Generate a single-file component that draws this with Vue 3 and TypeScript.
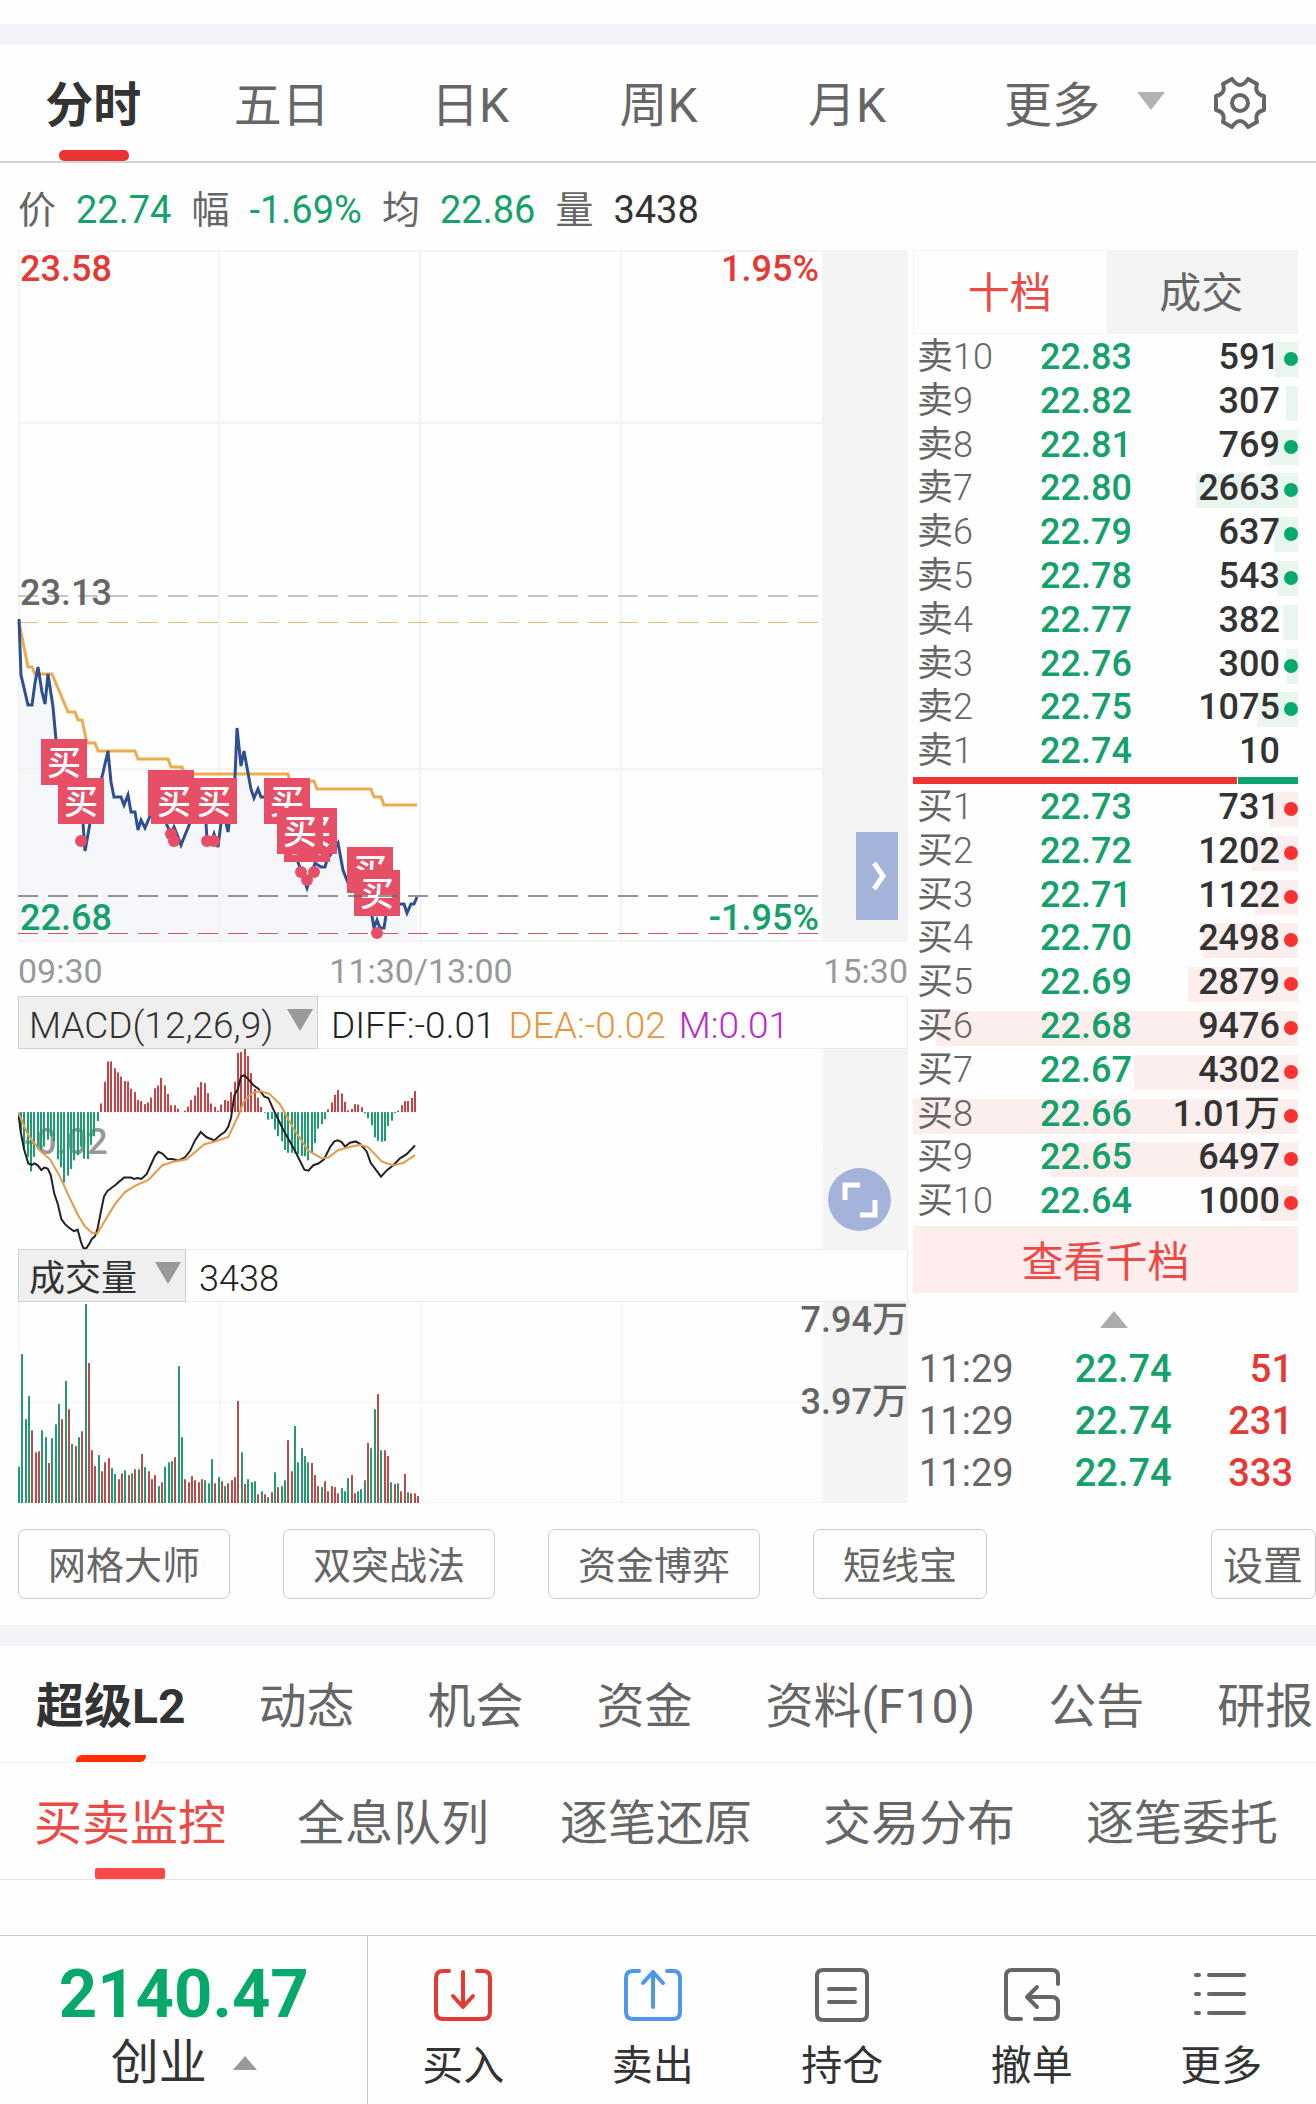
<script setup lang="ts">
interface Level { label: string; price: string; qty: string; lots: number; dot: boolean }

const periods = ['分时', '五日', '日K', '周K', '月K']

const quote = [
  { label: '价', value: '22.74', tone: 'down' },
  { label: '幅', value: '-1.69%', tone: 'down' },
  { label: '均', value: '22.86', tone: 'down' },
  { label: '量', value: '3438', tone: 'plain' },
]

const level = (label: string, price: string, lots: number, dot = true, qty = String(lots)): Level =>
  ({ label, price, qty, lots, dot })

const asks: Level[] = [
  level('卖10', '22.83', 591), level('卖9', '22.82', 307, false), level('卖8', '22.81', 769),
  level('卖7', '22.80', 2663), level('卖6', '22.79', 637), level('卖5', '22.78', 543),
  level('卖4', '22.77', 382, false), level('卖3', '22.76', 300), level('卖2', '22.75', 1075),
  level('卖1', '22.74', 10, false),
]
const bids: Level[] = [
  level('买1', '22.73', 731), level('买2', '22.72', 1202), level('买3', '22.71', 1122),
  level('买4', '22.70', 2498), level('买5', '22.69', 2879), level('买6', '22.68', 9476),
  level('买7', '22.67', 4302), level('买8', '22.66', 10070, true, '1.01万'),
  level('买9', '22.65', 6497), level('买10', '22.64', 1000),
]
const maxLots = 10070
const depth = (l: Level) => ({ '--depth': l.lots < 100 ? '0px' : `${(l.lots / maxLots) * 100}%` })

const ticks = [
  { time: '11:29', price: '22.74', qty: '51' },
  { time: '11:29', price: '22.74', qty: '231' },
  { time: '11:29', price: '22.74', qty: '333' },
]

const priceLine =
  '19,619 21,675 28,705 32,705 35,683 38,667 42,692 45,704 48,674 53,707 56,740 60,787 72,810 83,823 85,851 87,840 90,823 102,777 108,751 111,782 114,797 121,797 124,805 128,795 131,812 135,812 138,830 141,820 145,828 150,816 158,810 166,823 171,834 174,827 178,837 181,845 185,835 190,823 198,812 206,823 207,840 211,843 214,834 218,847 221,823 225,818 228,832 230,817 235,777 237,728 241,766 244,751 248,773 251,789 254,798 258,789 261,797 265,797 280,820 298,862 307,888 315,863 321,867 325,867 327,860 338,843 343,870 348,883 365,900 372,916 374,928 377,920 380,928 384,928 386,915 400,904 404,904 407,913 411,904 414,904 417,897'
const averageLine =
  '19,622 28,667 32,667 35,674 52,674 68,712 75,712 78,720 82,720 87,743 95,743 98,751 135,751 138,759 168,759 171,767 182,767 184,774 288,774 290,781 314,781 317,789 371,789 374,797 381,797 384,805 417,805'

const marks = [[41, 739], [58, 778], [148, 770], [151, 778], [191, 778], [264, 778], [284, 816], [291, 808], [277, 808], [347, 847], [354, 870]]
const dots = [[81, 841], [171, 834], [174, 841], [207, 841], [214, 841], [301, 872], [307, 880], [314, 872], [377, 933]]

const macd = [
  -55, -110, -130, -172, -130, -105, -115, -100, -80, -70, -85, -137, -160, -204, -184, -165, -140, -125, -100, -135, -136, -95, -70, -26,
  25, 88, 147, 147, 127, 115, 103, 90, 89, 68, 58, 35, 32, 23, 28, 42, 69, 77, 99, 77, 53, 20, 20, 10, 1, 4, 16, 35, 48, 72, 87, 84, 55, 25,
  15, 4, 22, 35, 33, 58, 88, 172, 174, 183, 162, 113, 67, 42, 15, -2, -22, -20, -50, -70, -85, -110, -118, -118, -120, -122, -127, -128,
  -140, -120, -90, -48, -35, -20, 8, 28, 50, 64, 54, 30, 5, 9, 23, 22, 14, -4, -18, -38, -73, -83, -86, -84, -40, -25, -3, 4, 20, 32, 32, 41, 61,
]
const diffLine =
  '55,385 62,440 72,490 85,532 95,536 104,532 114,538 124,551 133,544 143,547 152,565 163,620 173,648 184,693 195,708 208,719 222,728 233,724 243,760 250,777 258,779 268,765 276,750 285,743 293,720 302,675 312,628 322,612 345,595 372,573 393,573 402,577 413,574 424,577 440,563 453,535 465,510 475,498 487,503 503,519 517,519 535,524 555,514 570,496 585,465 602,441 620,456 643,465 660,450 675,440 685,425 693,400 703,335 714,315 723,280 733,276 745,288 760,305 775,315 793,338 805,342 820,375 850,435 885,495 913,550 925,553 940,537 955,532 972,520 990,485 1003,468 1013,465 1025,470 1035,483 1050,472 1067,468 1080,475 1100,497 1112,530 1143,570 1160,552 1180,537 1200,517 1220,505 1245,480'
const deaLine =
  '55,385 85,450 120,495 150,520 180,570 208,630 233,680 255,715 275,732 292,735 310,705 345,650 375,615 405,597 445,580 487,537 520,527 560,520 612,477 650,467 685,455 714,395 733,350 755,329 780,322 808,330 840,360 880,430 925,495 965,517 985,515 1015,493 1045,485 1080,478 1105,485 1145,526 1180,538 1210,530 1245,508'

/* positive: rising minute, negative: falling minute */
const volume = [
  -105, -432, -243, -310, 211, 147, 150, -211, -191, 116, -188, -228, -287, 243, -354, 272, -171, 165, -191, 208, -577, 406, 153, 107, -139,
  92, 118, 130, -101, -84, 69, 86, -95, 81, -86, 98, -98, 142, -104, 92, 69, 81, -49, 60, -105, -118, -121, 133, -397, -191, 69, 60, 78, 66,
  60, 69, -66, -57, -127, 57, -75, 63, -49, 57, 66, 75, 296, -147, 55, -69, -60, -63, 25, -34, 25, -17, 31, -89, 46, -49, -66, 182, 92,
  -223, -118, -159, -136, -118, 116, 81, 49, -46, 63, 34, 49, 46, 28, -43, -34, -72, 81, 28, -34, -40, -66, 174, -159, -272, 316, -153, 153,
  136, -60, 55, -57, 34, 84, -31, 28, 28, 20,
]
const barX = (i: number, start: number, step = 3.34) => start + 3 * Math.round(i * step)

const tools = ['网格大师', '双突战法', '资金博弈', '短线宝']
const sections = ['超级L2', '动态', '机会', '资金', '资料(F10)', '公告', '研报']
const monitors = ['买卖监控', '全息队列', '逐笔还原', '交易分布', '逐笔委托']

const actions = [
  { label: '买入', tone: 'red', paths: ['M16 4h-6q-7 0-7 7v34q0 7 7 7h40q7 0 7-7v-34q0-7-7-7h-6', 'M30 5v35M20 29l10 11 10-11'] },
  { label: '卖出', tone: 'blue', paths: ['M16 4h-6q-7 0-7 7v34q0 7 7 7h40q7 0 7-7v-34q0-7-7-7h-6', 'M30 40V5M20 16l10-11 10 11'] },
  { label: '持仓', tone: 'grey', paths: ['M11 3h38q6 0 6 6v38q0 6-6 6h-38q-6 0-6-6v-38q0-6 6-6z', 'M17 22h26M17 35h26'] },
  { label: '撤单', tone: 'grey', paths: ['M56 17v-8q0-6-6-6h-40q-6 0-6 6v37q0 6 6 6h9', 'M33 52h17q6 0 6-6v-10q0-6-6-6H25M35 20l-10 10 10 10'] },
  { label: '更多', tone: 'grey', paths: ['M5 8h3M18 8h35M5 27h3M18 27h35M5 46h3M18 46h35'] },
]
</script>

<template>
  <div class="page">
    <header class="top">
      <nav class="periods">
        <button v-for="(p, i) in periods" :key="p" class="period" :class="{ active: i === 0 }">{{ p }}</button>
        <button class="more">更多<svg width="28" height="18" viewBox="0 0 28 18"><path d="M0 0h28L14 18z" fill="#b3b3b3" /></svg></button>
        <button class="gear" aria-label="设置">
          <svg width="52" height="52" viewBox="-26 -26 52 52" fill="none" stroke="#666" stroke-width="4" stroke-linejoin="round">
            <path d="M-8-24Q-4-18 0-18Q4-18 8-24L17-19Q14-9 24-7V7Q14 9 17 19L8 24Q4 18 0 18Q-4 18-8 24L-17 19Q-14 9-24 7V-7Q-14-9-17-19Z" />
            <circle r="8" />
          </svg>
        </button>
      </nav>
    </header>

    <dl class="quote">
      <template v-for="q in quote" :key="q.label">
        <dt>{{ q.label }}</dt>
        <dd :class="q.tone">{{ q.value }}</dd>
      </template>
    </dl>

    <main class="board">
      <section class="charts">
        <div class="plot">
          <svg class="trend" viewBox="18 250 890 692">
            <rect x="822" y="250" width="86" height="692" fill="#f4f4f4" />
            <polygon :points="`19,942 ${priceLine} 417,942`" fill="#f6f7fb" />
            <path d="M18 251H822M18 423H822M18 769H822M18 941H822M19 250V942M219 250V942M420 250V942M621 250V942" stroke="#f3f3f3" stroke-width="2" />
            <path d="M18 596H818" stroke="#c6c6c6" stroke-width="2" stroke-dasharray="20 10" />
            <path d="M18 622.5H818" stroke="#e3bd73" stroke-dasharray="20 10" />
            <path d="M18 933.5H818" stroke="#c85a5a" stroke-dasharray="20 10" />
            <polyline :points="averageLine" fill="none" stroke="#eeab4d" stroke-width="3" />
            <polyline :points="priceLine" fill="none" stroke="#2f4f8f" stroke-width="3" />
            <g v-for="([x, y], i) in marks" :key="i">
              <rect :x="x" :y="y" width="46" height="46" fill="#e64f66" />
              <text :x="x + 23" :y="y + 36" class="mark">买</text>
            </g>
            <circle v-for="([x, y], i) in dots" :key="'d' + i" :cx="x" :cy="y" r="6" fill="#e64f66" />
            <path d="M18 896H818" stroke="#666" stroke-opacity=".7" stroke-width="2" stroke-dasharray="20 10" />
            <g class="scale">
              <text x="20" y="281" fill="#e53935">23.58</text>
              <text x="819" y="281" fill="#e53935" text-anchor="end">1.95%</text>
              <text x="20" y="605" fill="#666">23.13</text>
              <text x="20" y="930" fill="#15a06c">22.68</text>
              <text x="819" y="930" fill="#15a06c" text-anchor="end">-1.95%</text>
            </g>
          </svg>
          <button class="next" aria-label="展开">
            <svg width="14" height="30" viewBox="0 0 14 30"><path d="M2 2l9 13-9 13" fill="none" stroke="#fff" stroke-width="5" /></svg>
          </button>
        </div>
        <div class="times"><span>09:30</span><span>11:30/13:00</span><span>15:30</span></div>

        <div class="bar">
          <label class="picker wide">
            <select aria-label="指标"><option>MACD(12,26,9)</option></select>
            <svg width="26" height="22" viewBox="0 0 26 22"><path d="M0 0h26L13 22z" fill="#999" /></svg>
          </label>
          <span>DIFF:-0.01</span><span class="dea">DEA:-0.02</span><span class="m">M:0.01</span>
        </div>
        <div class="plot">
          <span class="base">-0.02</span>
          <svg class="macd" viewBox="54 200 2670 580" preserveAspectRatio="none">
            <rect x="2469" y="200" width="255" height="580" fill="#f4f4f4" />
            <path d="M54 490H2469" stroke="#eee" stroke-width="2" stroke-dasharray="4 14" />
            <rect v-for="(v, i) in macd" :key="i" :x="barX(i, 60)" :y="v > 0 ? 383 - v : 383" width="6" :height="Math.abs(v)" :fill="v > 0 ? '#c24446' : '#1d9e70'" />
            <polyline :points="diffLine" class="line" stroke="#222" />
            <polyline :points="deaLine" class="line" stroke="#e39a4b" />
          </svg>
          <button class="expand" aria-label="全屏">
            <svg width="36" height="36" viewBox="0 0 36 36" fill="none" stroke="#fff" stroke-width="5"><path d="M3 18V3H18M33 18V33H18" /></svg>
          </button>
        </div>

        <div class="bar">
          <label class="picker">
            <select class="han" aria-label="副图"><option>成交量</option></select>
            <svg width="26" height="22" viewBox="0 0 26 22"><path d="M0 0h26L13 22z" fill="#999" /></svg>
          </label>
          <span class="total">3438</span>
        </div>
        <div class="plot">
          <svg class="vol" viewBox="54 935 2670 583" preserveAspectRatio="none">
            <rect x="2469" y="935" width="255" height="583" fill="#f4f4f4" />
            <path d="M56 935V1518M660 935V1518M1263 935V1518M1866 935V1518M54 1227H2469M54 1516H2469" stroke="#f5f5f5" stroke-width="4" />
            <rect v-for="(v, i) in volume" :key="i" :x="barX(i, 54, 3.325)" :y="1518 - Math.abs(v)" width="6" :height="Math.abs(v)" :fill="v > 0 ? '#b94b4a' : '#259a70'" />
          </svg>
          <div class="volscale"><span>7.94万</span><span>3.97万</span></div>
        </div>
      </section>

      <aside class="side">
        <div class="sidetabs"><button class="on">十档</button><button>成交</button></div>
        <table class="book ask">
          <tbody>
            <tr v-for="l in asks" :key="l.label" :style="depth(l)">
              <th scope="row">{{ l.label[0] }}<span>{{ l.label.slice(1) }}</span></th><td>{{ l.price }}</td><td class="qty">{{ l.qty }}</td><td class="flag"><i v-if="l.dot"></i></td>
            </tr>
          </tbody>
        </table>
        <div class="ratio"><span class="buy"></span><span class="sell"></span></div>
        <table class="book bid">
          <tbody>
            <tr v-for="l in bids" :key="l.label" :style="depth(l)">
              <th scope="row">{{ l.label[0] }}<span>{{ l.label.slice(1) }}</span></th><td>{{ l.price }}</td><td class="qty">{{ l.qty }}</td><td class="flag"><i v-if="l.dot"></i></td>
            </tr>
          </tbody>
        </table>
        <button class="deep">查看千档</button>
        <button class="fold" aria-label="收起"><svg width="28" height="17" viewBox="0 0 28 17"><path d="M0 17h28L14 0z" fill="#acacac" /></svg></button>
        <table class="ticks">
          <tbody>
            <tr v-for="(t, i) in ticks" :key="i"><th scope="row">{{ t.time }}</th><td>{{ t.price }}</td><td class="qty">{{ t.qty }}</td></tr>
          </tbody>
        </table>
      </aside>
    </main>

    <div class="tools">
      <button v-for="t in tools" :key="t">{{ t }}</button>
      <button class="config">设置</button>
    </div>

    <nav class="sections">
      <button v-for="(s, i) in sections" :key="s" :class="{ active: i === 0 }">{{ s }}</button>
    </nav>
    <nav class="monitors">
      <button v-for="(m, i) in monitors" :key="m" :class="{ active: i === 0 }">{{ m }}</button>
    </nav>

    <footer class="dock">
      <button class="index">
        <strong>2140.47</strong>
        <span>创业<svg width="24" height="14" viewBox="0 0 24 14"><path d="M0 14h24L12 0z" fill="#999" /></svg></span>
      </button>
      <button v-for="a in actions" :key="a.label" class="action">
        <svg :class="a.tone" width="60" height="56" viewBox="0 0 60 56"><path v-for="d in a.paths" :key="d" :d="d" /></svg>
        {{ a.label }}
      </button>
    </footer>
  </div>
</template>

<style>
body { margin: 0; background: #fff; }
</style>

<style scoped>
.page {
  display: flex;
  flex-direction: column;
  min-height: 100vh;
  overflow-x: hidden;
  background: #fefefe;
  color: #333;
  font-family: Roboto, "Noto Sans CJK SC", sans-serif;
  font-size: 36px;
}
.page * { box-sizing: border-box; }
button, select { margin: 0; padding: 0; border: 0; background: none; color: inherit; font: inherit; white-space: nowrap; }
svg { display: block; }
table { width: 100%; border-collapse: collapse; table-layout: fixed; }
th, td { padding: 0; text-align: left; vertical-align: top; white-space: nowrap; }

.top { margin-top: 24px; border-top: 21px solid #f3f4f9; border-bottom: 2px solid #d3d3d3; }
.periods { display: flex; height: 116px; color: #666; font-size: 48px; }
.period { position: relative; flex: 0 0 14.32%; padding: 0 2px 5px 0; }
.period.active { color: #333; font-weight: 700; }
.period.active::after {
  content: ""; position: absolute; bottom: 0; left: 50%; width: 70px; height: 11px;
  margin-left: -35px; border-radius: 5px; background: #ea3434;
}
.more { display: flex; align-items: center; gap: 37px; margin-left: auto; padding-bottom: 4px; }
.gear { margin: 0 50px 0 49px; }

.quote { display: flex; align-items: center; gap: 20px; height: 87px; margin: 0; padding: 6px 0 0 18px; font-size: 38px; line-height: 60px; }
.quote dt { color: #666; }
.quote dd { margin: 0; }
.down { color: #15a06c; }

.board { display: grid; grid-template-columns: minmax(0, 890fr) minmax(0, 385fr); gap: 5px; padding: 0 18px; }
.plot { position: relative; }
.trend { width: 100%; height: auto; overflow: visible; }
.mark { fill: #fff; font-size: 34px; font-weight: 500; text-anchor: middle; }
.scale { font-size: 36px; font-weight: 500; }
.next {
  position: absolute; right: 10px; bottom: 22px; display: flex; align-items: center; justify-content: center;
  width: 42px; height: 88px; padding-left: 3px; background: #a4b3da;
}
.times { display: flex; justify-content: space-between; height: 54px; color: #999; font-size: 34px; line-height: 58px; }
.times span:nth-child(2) { margin-right: 84px; }

.bar { display: flex; align-items: center; gap: 13px; height: 53px; border: 1px solid #ebebeb; color: #222; font-size: 37px; font-weight: 300; line-height: 44px; }
.bar span { padding-top: 6px; }
.bar .total { font-size: 36px; }
.picker {
  display: flex; align-items: center; width: 168px; height: 53px; margin: -1px 0 -1px -1px; padding: 0 4px 0 10px;
  border: 1px solid #d0d0d0; background: #efefef; color: #333;
}
.picker.wide { width: 300px; }
.picker select { flex: 1; min-width: 0; padding-top: 6px; appearance: none; }
.picker .han { font-size: 36px; font-weight: 400; }
.picker svg { margin-bottom: 6px; }
.dea { color: #e6953e; }
.m { color: #b72bc9; }
.macd, .vol { position: relative; width: 100%; height: 200px; }
.vol { height: 201px; }
.line { fill: none; stroke-width: 2px; vector-effect: non-scaling-stroke; }
.base { position: absolute; left: 6px; top: 72px; color: #999; font-weight: 500; line-height: 42px; }
.expand {
  position: absolute; right: 17px; bottom: 18px; display: flex; align-items: center; justify-content: center;
  width: 63px; height: 63px; border-radius: 50%; background: #a4b3da;
}
.volscale {
  position: absolute; top: 0; right: 0; display: flex; flex-direction: column; gap: 46px;
  color: #666; font-weight: 500; line-height: 36px; text-align: right;
}

.sidetabs { display: flex; height: 84px; margin-bottom: 4px; border: 1px solid #f4f4f4; font-size: 42px; color: #666; }
.sidetabs button { flex: 1; padding-bottom: 5px; background: #f4f4f4; }
.sidetabs .on { background: #fefefe; color: #eb4b46; }
.book { height: 438px; font-weight: 500; line-height: 38px; }
.book tr { background: linear-gradient(var(--tint), var(--tint)) right 4px / var(--depth) 35px no-repeat; }
.book th { width: 33%; padding-left: 4px; color: #666; font-weight: 400; }
.book th span { font-weight: 300; }
.book td { color: #15a06c; }
.book .qty { color: #333; text-align: right; }
.book .flag { width: 18px; color: var(--dot); }
.flag i { display: block; width: 14px; height: 14px; margin: 14px 0 0 4px; border-radius: 50%; background: var(--dot); }
.ask { --tint: #e9f6ee; --dot: #06a96b; }
.bid { --tint: #fdeeee; --dot: #fa3232; }
.ratio { display: flex; gap: 1px; height: 7px; margin: 1px 0 4px; }
.buy { flex: 324; background: #f03434; }
.sell { flex: 60; background: #09a56b; }
.deep { display: block; width: 100%; height: 67px; padding-bottom: 3px; background: #fdeded; color: #eb4b46; font-size: 42px; }
.fold { display: flex; justify-content: center; align-items: center; width: 100%; height: 53px; padding-left: 16px; }
.ticks { font-size: 38px; font-weight: 500; line-height: 46px; }
.ticks tr { height: 52px; }
.ticks th { width: 42%; padding-left: 6px; color: #666; font-weight: 400; }
.ticks td { color: #15a06c; }
.ticks .qty { padding-right: 5px; color: #e53935; text-align: right; }

.tools { display: flex; gap: 53px; padding: 26px 0 26px 18px; color: #666; font-size: 38px; }
.tools button { height: 70px; padding: 0 29px 3px; border: 1px solid #ccc; border-radius: 7px; }
.tools .config { margin-left: auto; padding: 0 12px 2px 11px; font-size: 40px; }

.sections, .monitors { display: flex; flex: none; color: #666; font-size: 48px; overflow: hidden; }
.sections { gap: 73px; height: 138px; padding-left: 36px; border-top: 21px solid #f3f4f9; border-bottom: 1px solid #f0f0f0; }
.monitors { gap: 71px; height: 117px; padding-left: 34px; border-bottom: 1px solid #e4e4e4; margin-bottom: 55px; }
.sections button, .monitors button { position: relative; flex: none; padding-bottom: 4px; }
.sections .active { color: #333; font-weight: 700; }
.monitors .active { color: #eb4b46; }
.sections .active::after, .monitors .active::after {
  content: ""; position: absolute; bottom: 0; left: 50%; width: 70px; height: 7px; margin-left: -35px;
  border-radius: 6px 0 6px 0; background: #ff2e00;
}
.monitors .active::after { height: 11px; border-radius: 2px; background: #f84848; }

.dock { display: flex; height: 169px; margin-top: auto; border-top: 1px solid #c8c8c8; }
.index { flex: 0 0 28%; border-right: 1px solid #c8c8c8; }
.index strong { display: block; margin-top: 20px; color: #06a96b; font-size: 67px; line-height: 66px; }
.index span { display: flex; justify-content: center; align-items: center; gap: 26px; font-size: 48px; line-height: 72px; }
.action { flex: 1; display: flex; flex-direction: column; align-items: center; padding-top: 31px; font-size: 41px; line-height: 86px; }
.action svg { flex: none; fill: none; stroke: currentColor; stroke-width: 4; stroke-linecap: round; stroke-linejoin: round; }
.red { color: #e53935; }
.blue { color: #4f97ea; }
.grey { color: #666; }
</style>
